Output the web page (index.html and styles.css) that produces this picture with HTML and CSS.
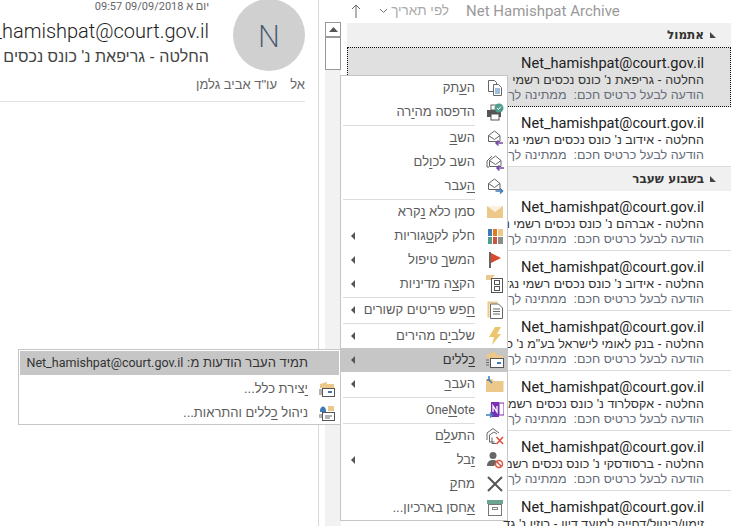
FILE: index.html
```html
<!DOCTYPE html>
<html lang="he">
<head>
<meta charset="utf-8">
<title>Net Hamishpat Archive</title>
<link rel="stylesheet" href="styles.css">
</head>
<body>
<div class="app">
  <section class="reading">
    <div class="head">
      <div class="meta">
        <div class="date">יום א 09/09/2018 09:57</div>
        <div class="from">Net_hamishpat@court.gov.il</div>
        <div class="subj">החלטה - גריפאת נ' כונס נכסים רשמי נגד פלוני</div>
      </div>
      <div class="avatar">N</div>
    </div>
    <div class="to"><span class="to-label">אל</span><span>עו"ד אביב גלמן</span></div>
    <div class="rule"></div>
  </section>
  <section class="listpane">
    <div class="toolbar">
      <svg class="tb-up" width="10" height="14" viewBox="0 0 10 14"><path d="M5 14V1M1 5l4-4 4 4" fill="none" stroke="#666"/></svg>
      <svg class="tb-chev" width="9" height="6" viewBox="0 0 9 6"><path d="M1 1l3.500 3.500L8 1" fill="none" stroke="#777"/></svg>
      <span class="tb-sort">לפי תאריך</span>
      <span class="tb-name">Net Hamishpat Archive</span>
    </div>
    <div class="listbody">
      <div class="scroll">
        <div class="sb-up"><svg width="9" height="5" viewBox="0 0 9 5"><path d="M4.500 0L9 5H0z" fill="#555"/></svg></div>
        <div class="sb-thumb"></div>
      </div>
      <div class="list">
        <div class="group">אתמול</div>
        <div class="row selected"><div class="n">Net_hamishpat@court.gov.il</div><div class="s">החלטה - גריפאת נ' כונס נכסים רשמי נגד</div><div class="p">הודעה לבעל כרטיס חכם:  ממתינה לך</div></div>
        <div class="row"><div class="n">Net_hamishpat@court.gov.il</div><div class="s">החלטה - אידוב נ' כונס נכסים רשמי נגד</div><div class="p">הודעה לבעל כרטיס חכם:  ממתינה לך</div></div>
        <div class="group">בשבוע שעבר</div>
        <div class="row"><div class="n">Net_hamishpat@court.gov.il</div><div class="s">החלטה - אברהם נ' כונס נכסים רשמי נגד</div><div class="p">הודעה לבעל כרטיס חכם:  ממתינה לך</div></div>
        <div class="row"><div class="n">Net_hamishpat@court.gov.il</div><div class="s">החלטה - אידוב נ' כונס נכסים רשמי נגד</div><div class="p">הודעה לבעל כרטיס חכם:  ממתינה לך</div></div>
        <div class="row"><div class="n">Net_hamishpat@court.gov.il</div><div class="s">החלטה - בנק לאומי לישראל בע"מ נ' כונס</div><div class="p">הודעה לבעל כרטיס חכם:  ממתינה לך</div></div>
        <div class="row"><div class="n">Net_hamishpat@court.gov.il</div><div class="s">החלטה - אקסלרוד נ' כונס נכסים רשמי נגד</div><div class="p">הודעה לבעל כרטיס חכם:  ממתינה לך</div></div>
        <div class="row"><div class="n">Net_hamishpat@court.gov.il</div><div class="s">החלטה - ברסודסקי נ' כונס נכסים רשמי נגד</div><div class="p">הודעה לבעל כרטיס חכם:  ממתינה לך</div></div>
        <div class="row"><div class="n">Net_hamishpat@court.gov.il</div><div class="s">זימון/ביטול/דחייה למועד דיון - רוזין נ' גד</div><div class="p">הודעה לבעל כרטיס חכם:  ממתינה לך</div></div>
      </div>
    </div>
  </section>
</div>

<nav class="menu main-menu">
  <div class="item"><span class="ic"><svg width="18" height="18" viewBox="0 0 18 18" fill="#fff" stroke="#666"><path d="M2.500 1.500h6l2 2v9h-8z"/><path d="M7.500 5.500h5l3 3v8h-8z"/><path d="M9 10h5M9 12h5M9 14h5" stroke="#3e7ab8"/></svg></span><span class="lb">ה<u>ע</u>תק</span></div>
  <div class="item"><span class="ic"><svg width="18" height="18" viewBox="0 0 18 18"><rect x="5" y="2" width="7" height="5" fill="#fff" stroke="#666"/><path d="M1 7h14v7H1z" fill="#555"/><rect x="5" y="11" width="8" height="6" fill="#fff" stroke="#555"/><circle cx="13" cy="5" r="4.500" fill="#4f9d8c"/><path d="M11 5l1.500 1.500L15 3.500" fill="none" stroke="#fff"/></svg></span><span class="lb">הדפסה מה<u>י</u>רה</span></div>
  <div class="sep"></div>
  <div class="item"><span class="ic"><svg width="18" height="18" viewBox="0 0 18 18" fill="none" stroke="#666"><path d="M2.500 6.500L8.500 2l5.500 4.500v6H2.500z"/><path d="M2.500 6.500l6 4 5.500-4"/><path d="M17 14H10M12.500 11.500L10 14l2.500 2.500" stroke="#7a4aa8" stroke-width="1.500"/></svg></span><span class="lb">הש<u>ב</u></span></div>
  <div class="item"><span class="ic"><svg width="18" height="18" viewBox="0 0 18 18" fill="none" stroke="#666"><path d="M1 8L6 3M1 8v6h2"/><path d="M3.500 7.500L9.500 3l5.500 4.500v6H3.500z"/><path d="M3.500 7.500l6 4 5.500-4"/><path d="M18 15H11M13.500 12.500L11 15l2.500 2.500" stroke="#7a4aa8" stroke-width="1.500"/></svg></span><span class="lb">השב לכ<u>ו</u>לם</span></div>
  <div class="item"><span class="ic"><svg width="18" height="18" viewBox="0 0 18 18" fill="none" stroke="#666"><path d="M2.500 6.500L8.500 2l5.500 4.500v6H2.500z"/><path d="M2.500 6.500l6 4 5.500-4"/><path d="M9.500 14h7M14 11.500l2.500 2.500-2.500 2.500" stroke="#3e7ab8" stroke-width="1.500"/></svg></span><span class="lb"><u>ה</u>עבר</span></div>
  <div class="sep"></div>
  <div class="item"><span class="ic"><svg width="16" height="12" viewBox="0 0 16 12"><rect width="16" height="12" fill="#ecc88a"/><path d="M0 0l8 6 8-6" fill="#fff" opacity=".75"/></svg></span><span class="lb">סמן כלא <u>נ</u>קרא</span></div>
  <div class="item"><span class="ic"><svg width="15" height="15" viewBox="0 0 15 15"><rect width="4" height="7" fill="#3e7ab8"/><rect x="5" width="4" height="7" fill="#e07b22"/><rect x="10" width="5" height="7" fill="#ecc88a"/><rect y="8" width="4" height="7" fill="#4f9d8c"/><rect x="5" y="8" width="4" height="7" fill="#c9553f"/><rect x="10" y="8" width="5" height="7" fill="#8c8c8c"/></svg></span><span class="lb">חלק לק<u>ט</u>גוריות</span><span class="ar"></span></div>
  <div class="item"><span class="ic"><svg width="14" height="16" viewBox="0 0 14 16"><rect x="1" width="2" height="16" fill="#666"/><path d="M3 1l10 5-10 5z" fill="#d9492e"/></svg></span><span class="lb">המש<u>ך</u> טיפול</span><span class="ar"></span></div>
  <div class="item"><span class="ic"><svg width="18" height="18" viewBox="0 0 18 18"><path d="M0 0h9L6 3v2H0z" fill="#ecc88a"/><rect x="5.500" y="3.500" width="11" height="14" fill="#fff" stroke="#555"/><rect x="8.500" y="5.500" width="5" height="4" fill="none" stroke="#555"/><rect x="8.500" y="11.500" width="5" height="4" fill="none" stroke="#555"/></svg></span><span class="lb">הק<u>צ</u>ה מדיניות</span><span class="ar"></span></div>
  <div class="sep"></div>
  <div class="item"><span class="ic"><svg width="16" height="18" viewBox="0 0 16 18"><path d="M.5.500h10v2H2.500v14h-2z" fill="#ecc88a"/><path d="M3.500 3h8l4 4v10.500h-12z" fill="#fff" stroke="#666"/><path d="M6 8h7M6 10.500h7M6 13h7" stroke="#666"/></svg></span><span class="lb"><u>ח</u>פש פריטים קשורים</span><span class="ar"></span></div>
  <div class="sep"></div>
  <div class="item"><span class="ic"><svg width="12" height="18" viewBox="0 0 12 18"><path d="M6 0h6L8 7h4L3 18l2-8H0z" fill="#ecc66e"/></svg></span><span class="lb">שלב<u>י</u>ם מהירים</span><span class="ar"></span></div>
  <div class="item on"><span class="ic"><svg width="18" height="18" viewBox="0 0 18 18"><path d="M1 3l9-2v3h7v4H1z" fill="#ecc88a"/><rect x="4.500" y="7.500" width="13" height="9" fill="#fff" stroke="#555"/><path d="M11 12h4" stroke="#3e7ab8" stroke-width="2"/><path d="M0 9h3M0 11.500h3M0 14h3" stroke="#666"/></svg></span><span class="lb"><u>כ</u>ללים</span><span class="ar"></span></div>
  <div class="item"><span class="ic"><svg width="18" height="16" viewBox="0 0 18 16"><path d="M0 3h6l2 2h9.500v11H0z" fill="#ecc88a"/><path d="M3 0v4H1M3 4l3 3" fill="none" stroke="#3e7ab8" stroke-width="1.500"/></svg></span><span class="lb">העב<u>ר</u></span><span class="ar"></span></div>
  <div class="sep"></div>
  <div class="item"><span class="ic"><svg width="18" height="18" viewBox="0 0 18 18"><path d="M5 1h8v15H5z" fill="#7b2fb5"/><path d="M13 2h5v12h-5z" fill="#fff" stroke="#7b2fb5"/><path d="M7 11V5l4 6V5" fill="none" stroke="#fff" stroke-width="1.300"/><path d="M0 14h6M4 11.500L6.500 14 4 16.500" fill="none" stroke="#3e7ab8" stroke-width="1.500"/></svg></span><span class="lb lat">One<u>N</u>ote</span></div>
  <div class="sep"></div>
  <div class="item"><span class="ic"><svg width="18" height="18" viewBox="0 0 18 18" fill="none" stroke="#666"><path d="M1 6L7 1.500 13 6"/><path d="M1 6v7M3.500 8v7h5M3.500 8L8 5l3 2"/><path d="M6 10.500v6h4"/><path d="M10.500 10l6.500 7M17 10l-6.500 7" stroke="#d9533f" stroke-width="1.600"/></svg></span><span class="lb">התע<u>ל</u>ם</span></div>
  <div class="item"><span class="ic"><svg width="18" height="18" viewBox="0 0 18 18"><circle cx="7" cy="4.500" r="3.500" fill="#666"/><path d="M1 15c0-5 3-6 6-6 2 0 3 .5 4 1.500L8 15z" fill="#666"/><circle cx="13" cy="13" r="3.500" fill="#fff" stroke="#d9533f" stroke-width="1.500"/><path d="M10.500 10.500l5 5" stroke="#d9533f" stroke-width="1.500"/></svg></span><span class="lb"><u>ז</u>בל</span><span class="ar"></span></div>
  <div class="item"><span class="ic"><svg width="16" height="16" viewBox="0 0 16 16"><path d="M1 1l14 14M15 1L1 15" stroke="#555" stroke-width="2"/></svg></span><span class="lb">מח<u>ק</u></span></div>
  <div class="item"><span class="ic"><svg width="16" height="16" viewBox="0 0 16 16"><rect width="16" height="4" fill="#6aa592"/><rect x="1.500" y="4.500" width="13" height="11" fill="#fff" stroke="#777"/><rect x="5.500" y="7.500" width="5" height="2" fill="none" stroke="#888"/></svg></span><span class="lb"><u>א</u>חסן בארכיון...</span></div>
</nav>

<nav class="menu sub-menu">
  <div class="sub-item on"><span class="sub-ic"></span><span class="lb">תמיד העבר הודעות מ: <span class="lat">Net_hamishpat@court.gov.il</span></span></div>
  <div class="sub-item"><span class="sub-ic"><svg width="16" height="16" viewBox="0 0 16 16"><path d="M1 3l7-2v2h7v4H1z" fill="#ecc88a"/><rect x="3.500" y="7.500" width="12" height="8" fill="#fff" stroke="#555"/><path d="M9 11h4" stroke="#3e7ab8" stroke-width="2"/><path d="M0 9h3M0 11h3M0 13h3" stroke="#666"/></svg></span><span class="lb"><u>י</u>צירת כלל...</span></div>
  <div class="sub-item"><span class="sub-ic"><svg width="16" height="18" viewBox="0 0 16 18"><path d="M9 2h6v5H9z" fill="#ecc88a"/><rect x="3.500" y="8.500" width="12" height="8" fill="#fff" stroke="#555"/><path d="M6 12h7M6 14h5" stroke="#666"/><path d="M1 7c0-6 6-6 6 0v1H1z" fill="#3e7ab8"/><path d="M0 11h3M0 13h3" stroke="#666"/></svg></span><span class="lb">ניהול <u>כ</u>ללים והתראות...</span></div>
</nav>
</body>
</html>
```
FILE: styles.css
```css
* { box-sizing: border-box; }
html, body { margin: 0; height: 526px; overflow: hidden; background: #fff; }
body {
  position: relative;
  width: 740px;
  font-family: "Roboto", "Liberation Sans", sans-serif;
  color: #444;
}
.app { display: flex; height: 526px; }

/* Reading pane */
.reading { width: 319px; flex: none; border-right: 1px solid #d8d8d8; overflow: hidden; padding-right: 13px; direction: rtl; }
.head { display: flex; height: 73px; }
.avatar {
  flex: none; width: 72px; height: 72px; margin-top: -1px; border-radius: 50%;
  background: #d0d0d0; color: #4a5a70; font: 300 31px/72px "Open Sans", sans-serif; text-align: center;
}
.meta { order: 2; margin-right: 24px; white-space: nowrap; width: 210px; }
.date { font: 11px/14px "Roboto", "Liberation Sans", sans-serif; color: #666; height: 14px; }
.from { font: 20px/26px "Roboto", "Liberation Sans", sans-serif; font-weight: 300; color: #222; direction: rtl; margin-top: 4px; }
.subj { font: 16px/18px "Liberation Sans", sans-serif; color: #444; margin-top: 4px; }
.to { display: flex; font: 13px/16px "Liberation Sans", sans-serif; color: #666; margin-top: 4px; }
.to-label { width: 28px; }
.rule { height: 1px; background: #e2e2e2; margin-top: 8px; }

/* Message list */
.listpane { flex: 1; min-width: 0; padding-left: 6px; }
.toolbar { display: flex; align-items: center; height: 22px; color: #aaa; white-space: nowrap; }
.tb-up { margin-left: 26px; flex: none; }
.tb-chev { margin-left: 18px; flex: none; }
.tb-sort { width: 51px; flex: none; font: 13.500px/18px "Liberation Sans", sans-serif; direction: rtl; margin-left: 10px; }
.tb-name { margin-left: 17px; font: 15px/20px "Roboto", sans-serif; color: #999; }
.listbody { display: flex; }
.scroll { width: 16px; height: 504px; background: #f2f2f2; margin-right: 6px; flex: none; }
.sb-up { height: 15px; border: 1px solid #999; background: #fff; display: flex; align-items: center; justify-content: center; }
.sb-thumb { height: 33px; border: 1px solid #999; background: #fff; }
.list { width: 384px; direction: rtl; margin-top: 1px; }
.group {
  position: relative; height: 24px; background: #f0f0f0; padding-right: 27px;
  font: bold 12px/25px "DejaVu Sans", "Liberation Sans", sans-serif; color: #333;
}
.group::before {
  content: ""; position: absolute; right: 15px; top: 9px; width: 6px; height: 6px;
  background: #444; clip-path: polygon(0 0, 0 100%, 100% 100%);
}
.row {
  height: 60px; padding: 5px 27px 0 0; border-bottom: 1px solid #dcdcdc;
  white-space: nowrap; overflow: hidden;
}
.row.selected { background: #e0e0e0; border: 1px dotted #111; padding-top: 4px; padding-right: 26px; }
.n { font: 14.600px/22px "Roboto", "Liberation Sans", sans-serif; color: #222; direction: ltr; text-align: right; }
.s { font: 12.500px/15px "Liberation Sans", sans-serif; color: #333; margin-top: -1px; }
.p { font: 12.500px/14px "Liberation Sans", sans-serif; color: #666c78; white-space: pre; }

/* Context menus */
.menu {
  position: absolute; background: #fff; border: 1px solid #c6c6c6; direction: rtl;
  font: 13px/24px "Liberation Sans", sans-serif; color: #5c5c5c; white-space: nowrap;
}
.lat { font-family: "Roboto", sans-serif; font-size: 12.500px; }
.main-menu { left: 340px; top: 75px; width: 168px; height: 446px; }
.item { display: flex; align-items: center; height: 24px; }
.item.on, .sub-item.on { background: #c6c6c6; color: #333; }
.ic { flex: none; width: 32px; height: 24px; padding-left: 8px; display: flex; align-items: center; justify-content: center; }
.lb { flex: 1; min-width: 0; }
.lb u { text-underline-offset: 2px; text-decoration-thickness: 1px; }
.ar { flex: none; width: 16px; height: 24px; position: relative; margin-left: 4px; }
.ar::before {
  content: ""; position: absolute; left: 6px; top: 8px;
  border-style: solid; border-width: 4px 4px 4px 0; border-color: transparent #555 transparent transparent;
}
.sep { height: 2px; margin: 0 32px 0 2px; border-bottom: 1px solid #dcdcdc; }
.sub-menu { left: 18px; top: 349px; width: 323px; height: 76px; padding: 1px; }
.sub-item { display: flex; align-items: center; height: 24px; }
.sub-item.on { margin-bottom: 2px; }
.sub-ic { flex: none; width: 31px; padding-left: 7px; display: flex; justify-content: center; }
```
